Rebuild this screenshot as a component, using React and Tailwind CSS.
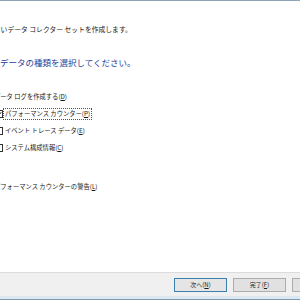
export default function App() {
  const font = "font-['Noto_Sans_CJK_JP','Noto_Sans_CJK_SC',sans-serif]";
  const Box = ({ checked }) => (
    <div className="w-[8px] h-[8px] border border-[#333] bg-white ml-[-5px] shrink-0 flex items-center justify-center">
      {checked && (
        <svg width="6" height="6" viewBox="0 0 6 6">
          <path d="M0.8 3 L2.4 4.6 L5.2 1.2" fill="none" stroke="#222" strokeWidth="1" />
        </svg>
      )}
    </div>
  );
  return (
    <div className={`w-[300px] h-[300px] bg-white overflow-hidden flex flex-col ${font} text-[#1a1a1a]`}>
      <div className="h-px bg-[#8ea4b6] shrink-0" />
      <div className="flex-1 flex flex-col">
        <div className="mt-[24px] h-[8px] leading-[8px] text-[6.8px] whitespace-nowrap ml-[-13px]">
          新しいデータ コレクター セットを作成します。
        </div>
        <div className="mt-[24px] h-[10px] leading-[10px] text-[8.5px] text-[#1f3d99] whitespace-nowrap">
          データの種類を選択してください。
        </div>
        <div className="mt-[21px] flex flex-col text-[6.3px]">
          <div className="h-[17px] flex items-center whitespace-nowrap ml-[-6px]">
            データ ログを作成する(<span className="underline">D</span>)
          </div>
          <div className="h-[17px] flex items-center whitespace-nowrap">
            <Box checked />
            <span className="px-[1px] h-[12px] leading-[10px] border border-dotted border-[#555]">
              パフォーマンス カウンター(<span className="underline">P</span>)
            </span>
          </div>
          <div className="h-[17px] flex items-center whitespace-nowrap">
            <Box />
            <span className="ml-[2px]">
              イベント トレース データ(<span className="underline">E</span>)
            </span>
          </div>
          <div className="h-[17px] flex items-center whitespace-nowrap">
            <Box />
            <span className="ml-[2px]">
              システム構成情報(<span className="underline">C</span>)
            </span>
          </div>
        </div>
        <div className="mt-[22px] h-[17px] flex items-center text-[6.3px] whitespace-nowrap ml-[-6px]">
          パフォーマンス カウンターの警告(<span className="underline">L</span>)
        </div>
      </div>
      <div className="h-[24px] shrink-0 bg-[#f0f0f0] border-t border-[#dcdcdc] flex items-start pt-[5px] pl-[174px] gap-[6px]">
        <div className="w-[53px] h-[14px] shrink-0 border border-[#3c7fb1] bg-[#e5e5e5] flex items-center justify-center text-[6px] leading-none">
          次へ(<span className="underline">N</span>)
        </div>
        <div className="w-[53px] h-[14px] shrink-0 border border-[#adadad] bg-[#e1e1e1] flex items-center justify-center text-[6px] leading-none">
          完了(<span className="underline">F</span>)
        </div>
        <div className="w-[53px] h-[14px] shrink-0 border border-[#adadad] bg-[#e1e1e1] flex items-center justify-center text-[6px] leading-none">
          キャンセル
        </div>
      </div>
      <div className="h-[3px] shrink-0 bg-[#dbe8f1]" />
      <div className="h-px shrink-0 bg-[#7f98ad]" />
    </div>
  );
}
